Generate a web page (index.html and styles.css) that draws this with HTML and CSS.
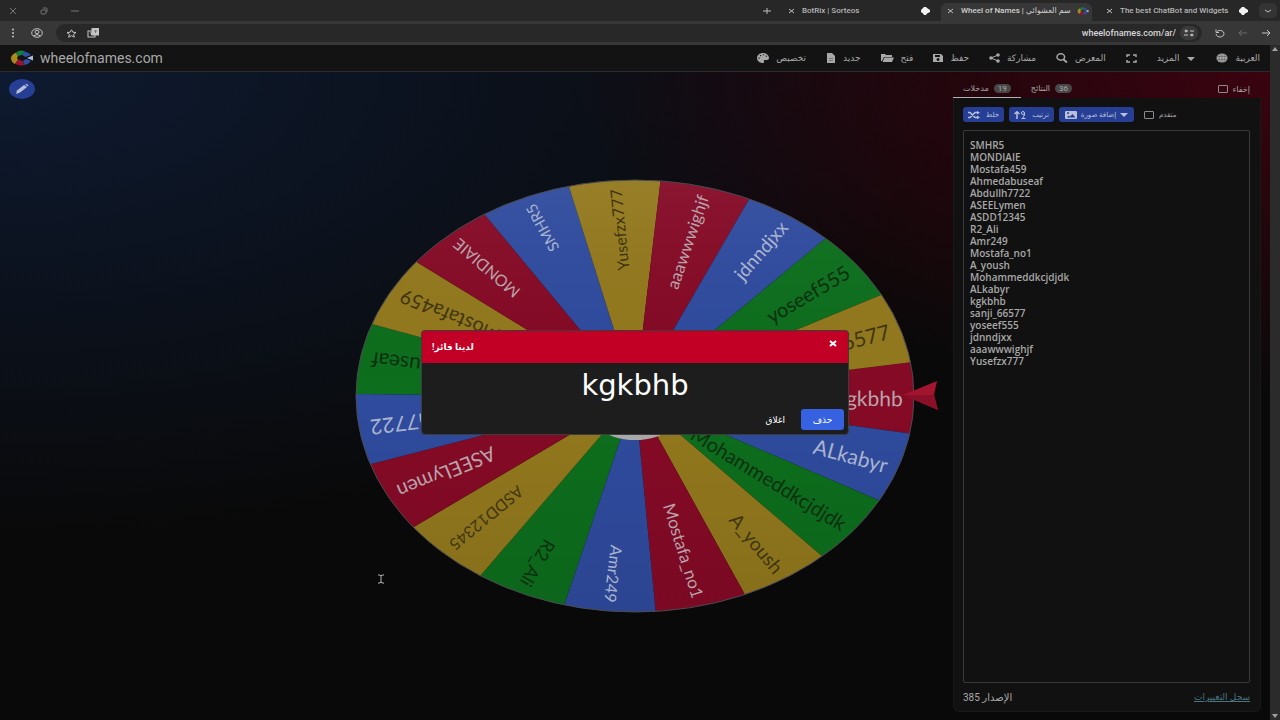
FILE: index.html
```html
<!DOCTYPE html>
<html lang="ar">
<head>
    <meta charset="UTF-8">
    <meta name="viewport" content="width=device-width, initial-scale=1">
    <title>Wheel of Names</title>
    <link rel="stylesheet" href="styles.css">
</head>
<body>
    <div class="tab-strip">
        <div class="window-controls">
            <button aria-label="Close window"><svg width="8" height="8" viewBox="0 0 8 8"><path d="M1 1l6 6M7 1L1 7"/></svg></button>
            <button aria-label="Restore window"><svg width="8" height="8" viewBox="0 0 8 8"><rect x="1" y="3" width="5" height="4" rx="1"/><path d="M3 1h3q1 0 1 1v3"/></svg></button>
            <button aria-label="Minimize window"><svg width="8" height="8" viewBox="0 0 8 8"><path d="M0 4h8"/></svg></button>
        </div>
        <button class="new-tab" aria-label="New tab"><svg width="8" height="8" viewBox="0 0 8 8"><path d="M0 4h8M4 1v6"/></svg></button>
        <div class="tab">
            <button class="tab-close" aria-label="Close tab"><svg width="8" height="8" viewBox="0 0 8 8"><path d="M1 2l5 4M6 2L1 6"/></svg></button>
            <span class="tab-title">BotRix | Sorteos</span>
            <svg class="favicon" width="10" height="8" viewBox="0 0 10 8"><path d="M4 0h2l1 1l3 2v2L7 6.500L6 8H4L3 6.500L1 5V3l2-2z" fill="#f2f2f2"/></svg>
        </div>
        <div class="tab active">
            <button class="tab-close" aria-label="Close tab"><svg width="8" height="8" viewBox="0 0 8 8"><path d="M1 2l5 4M6 2L1 6"/></svg></button>
            <span class="tab-title">Wheel of Names | سم العشوائي</span>
            <svg class="favicon" width="12" height="8" viewBox="0 0 24 16"><use href="#wheel-logo"/></svg>
        </div>
        <div class="tab">
            <button class="tab-close" aria-label="Close tab"><svg width="8" height="8" viewBox="0 0 8 8"><path d="M1 2l5 4M6 2L1 6"/></svg></button>
            <span class="tab-title">The best ChatBot and Widgets</span>
            <svg class="favicon" width="10" height="8" viewBox="0 0 10 8"><path d="M4 0h2l1 1l3 2v2L7 6.500L6 8H4L3 6.500L1 5V3l2-2z" fill="#f2f2f2"/></svg>
        </div>
        <button class="tab-search" aria-label="Search tabs"><svg width="8" height="8" viewBox="0 0 8 8"><path d="M1 3l3 2l3-2"/></svg></button>
    </div>

    <div class="address-bar">
        <button aria-label="Menu"><svg width="10" height="10" viewBox="0 0 10 10"><g fill="#c4c4c4" stroke="none"><circle cx="5" cy="1.5" r="1"/><circle cx="5" cy="5" r="1"/><circle cx="5" cy="8.5" r="1"/></g></svg></button>
        <button aria-label="Profile"><svg width="12" height="10" viewBox="0 0 12 10"><ellipse cx="6" cy="5" rx="5.3" ry="4.3"/><ellipse cx="6" cy="4" rx="2" ry="1.6"/><path d="M2.5 8q3.500-3 7 0"/></svg></button>
        <div class="url-box">
            <button aria-label="Bookmark"><svg width="11" height="9" viewBox="0 0 11 9"><path d="M5.500.8l1.300 2.400l3.200.3l-2.400 1.900l.7 2.800l-2.800-1.500l-2.800 1.500l.7-2.800L1 3.500l3.200-.3z"/></svg></button>
            <button aria-label="Translate"><svg width="12" height="10" viewBox="0 0 12 10"><rect x="1" y="3" width="7" height="6"/><rect x="5" y="0.500" width="6.500" height="6.500" fill="#c4c4c4"/><path d="M3 5h3M4.500 5v2"/><path d="M7 3h3M8.500 2v3" stroke="#777"/></svg></button>
            <input type="text" value="wheelofnames.com/ar/" aria-label="Address">
            <button class="site-info" aria-label="Site information"><svg width="10" height="8" viewBox="0 0 10 8"><path d="M1 2h3M6 2h4M0 6h4M6 6h3"/><circle cx="2" cy="2" r="1"/><circle cx="8" cy="6" r="1"/></svg></button>
        </div>
        <button aria-label="Reload"><svg width="10" height="9" viewBox="0 0 10 9"><path d="M2 2.500a4 3.300 0 1 1-1 2.500M1 0.500v3h3"/></svg></button>
        <button class="faded" aria-label="Forward"><svg width="10" height="8" viewBox="0 0 10 8"><path d="M9 4H1M4 1L1 4l3 3"/></svg></button>
        <button aria-label="Back"><svg width="10" height="8" viewBox="0 0 10 8"><path d="M1 4h8M6 1l3 3l-3 3"/></svg></button>
    </div>

    <div class="viewport">
        <div class="page">
            <header class="app-header">
                <a class="brand" href="#">
                    <svg width="24" height="16" viewBox="0 0 24 16">
                        <g id="wheel-logo">
                            <path d="M6 2.500L8 6L7 8H1q0-3 5-5.500z" fill="#a98a1c"/>
                            <path d="M1 8h6l1 2l-3 4q-4-2-4-6z" fill="#a98a1c"/>
                            <path d="M5 13.500l3.500-4l4 1.500l2 4q-6 1.500-9.500-1.500z" fill="#9c1030"/>
                            <path d="M6 2.500q4-3.500 9-1L12 5L8 6z" fill="#11803a"/>
                            <path d="M15 1.500q4 1 6 3.500l-5.500 2l-3.500-2z" fill="#2e50a8"/>
                            <path d="M13 11L16 9l5 2q-2 3-6.500 4z" fill="#2e50a8"/>
                            <path d="M17 8l6-2.500v5z" fill="#a9bfe0"/>
                        </g>
                    </svg>
                    <span>wheelofnames.com</span>
                </a>
                <nav class="menu">
                    <button><svg width="12" height="10" viewBox="0 0 12 10"><path class="solid" fill-rule="evenodd" d="M6 0C2.500 0 0 2.200 0 5s2.500 5 6 5c1.200 0 1.300-1 .9-1.600C6.500 7.500 7 7 8 7h2c1.200 0 2-.9 2-2C12 2.200 9.300 0 6 0zM2 4.500a.7 .6 0 1 0 .1 0zM3.500 2a.7 .6 0 1 0 .1 0zM6.500 1.200a.7 .6 0 1 0 .1 0zM9.300 2.500a.7 .6 0 1 0 .1 0z"/></svg>تخصيص</button>
                    <button><svg width="10" height="10" viewBox="0 0 10 10"><path class="solid" d="M1 0h5l3 3v7H1z"/><path d="M3 5.500h4M3 7.500h4" stroke="#777"/></svg>جديد</button>
                    <button><svg width="13" height="10" viewBox="0 0 13 10"><path class="solid" d="M0 1h4l1 1h6v2H3L1 8H0zM3.500 4.500H13L11 9H1.500z"/></svg>فتح</button>
                    <button><svg width="10" height="10" viewBox="0 0 10 10"><path class="solid" fill-rule="evenodd" d="M0 1h8l2 2v6H0zM2 2h5v2H2zM5 5a1.500 1.500 0 1 0 .1 0z"/></svg>حفظ</button>
                    <button><svg width="11" height="10" viewBox="0 0 11 10"><path d="M9 2L2 5l7 3"/><g class="solid"><circle cx="9" cy="2" r="1.800"/><circle cx="2" cy="5" r="1.800"/><circle cx="9" cy="8" r="1.800"/></g></svg>مشاركة</button>
                    <button><svg width="12" height="10" viewBox="0 0 12 10"><ellipse cx="4.800" cy="4" rx="3.800" ry="3.200" stroke-width="1.500"/><path d="M7.500 6.500l3.500 3" stroke-width="1.800"/></svg>المعرض</button>
                    <button aria-label="Fullscreen"><svg width="11" height="9" viewBox="0 0 11 9"><path d="M1 3V1h3M7 1h3v2M1 6v2h3M7 8h3V6" stroke-width="1.500"/></svg></button>
                    <button>المزيد<svg width="10" height="10" viewBox="0 0 10 10"><path class="solid" d="M1 4h8l-4 4z"/></svg></button>
                    <button><svg width="12" height="10" viewBox="0 0 12 10"><ellipse class="solid" cx="6" cy="5" rx="5.500" ry="4.500"/><path d="M0 3.500h12M0 6.500h12M6 0v10M4 1q-2 4 0 8M8 1q2 4 0 8" stroke="#555" stroke-width=".5"/></svg>العربية</button>
                </nav>
            </header>

            <main class="content">
                <div class="side">
                    <button class="edit-button" aria-label="Edit title"><svg width="14" height="12" viewBox="0 0 14 12"><path d="M1 11l1-3.500L9 2l3 2L5 9.500z" fill="#b9c1da"/><path d="M10 1.500q1-1 2.500 0t.500 2z" fill="#b9c1da"/></svg></button>
                </div>

                <svg class="wheel" viewBox="0 0 620 440" role="img" aria-label="Wheel">
                    <defs>
                        <linearGradient id="shade" x1="0" y1="0" x2="0" y2="1">
                            <stop offset="0" stop-color="#fff" stop-opacity=".05"/>
                            <stop offset="0.500" stop-color="#000" stop-opacity="0"/>
                            <stop offset="1" stop-color="#000" stop-opacity=".08"/>
                        </linearGradient>
                    </defs>
                    <g id="slices"></g>
                    <ellipse class="rim" cx="310" cy="220" rx="279" ry="216" fill="url(#shade)"/>
                    <g id="labels"></g>
                    <ellipse cx="310" cy="220" rx="56" ry="44" fill="#a8a8a8"/>
                    <path d="M578 219L612 205L609 219L613 234z" fill="#a3142f"/>
                    <path d="M578 219L609 219L613 234z" fill="#8a0f28"/>
                </svg>

                <aside class="side entries">
                    <div class="entries-tabs">
                        <button class="entries-tab selected"><span>مدخلات</span><span class="badge">19</span></button>
                        <button class="entries-tab"><span>النتائج</span><span class="badge">36</span></button>
                        <label class="check"><input type="checkbox">إخفاء</label>
                    </div>
                    <div class="card">
                        <div class="tools">
                            <button class="tool shuffle"><svg width="12" height="8" viewBox="0 0 12 8"><path d="M0 1.500h2l5 5h3M0 6.500h2l5-5h3" stroke-width="1.500"/><path d="M9 0l3 1.500L9 3.500zM9 4.500l3 2L9 8z" fill="#b9c1da" stroke="none"/></svg>خلط</button>
                            <button class="tool sort"><svg width="12" height="8" viewBox="0 0 12 8"><path d="M3 8V1M0.500 3L3 .8L5.500 3" stroke-width="1.500"/><circle cx="9" cy="2" r="1.500"/><path d="M10.500 2v2l-2 3.500M7.500 7.500h4"/></svg>ترتيب</button>
                            <button class="tool image"><svg width="12" height="8" viewBox="0 0 12 8"><path fill="#b9c1da" stroke="none" fill-rule="evenodd" d="M1 0h10q1 0 1 1v6q0 1-1 1H1q-1 0-1-1V1q0-1 1-1zM2 6.500h8.500L7.500 3L5 5.500L3.500 4.500zM3 1.300a1 .8 0 1 0 .1 0z"/></svg>إضافة صورة<svg width="8" height="4" viewBox="0 0 8 4"><path d="M0 0h8L4 4z" fill="#b9c1da" stroke="none"/></svg></button>
                            <label class="check small"><input type="checkbox">متقدم</label>
                        </div>
                        <textarea class="names" aria-label="Entries" spellcheck="false">SMHR5
MONDIAIE
Mostafa459
Ahmedabuseaf
Abdullh7722
ASEELymen
ASDD12345
R2_Ali
Amr249
Mostafa_no1
A_yoush
Mohammeddkcjdjdk
ALkabyr
kgkbhb
sanji_66577
yoseef555
jdnndjxx
aaawwwighjf
Yusefzx777</textarea>
                        <footer class="card-footer">
                            <span class="version" dir="rtl">الإصدار 385</span>
                            <a href="#">سجل التغييرات</a>
                        </footer>
                    </div>
                </aside>
            </main>

            <div class="overlay">
                <div class="dialog" role="dialog" aria-labelledby="dialog-title">
                    <div class="dialog-header">
                        <span id="dialog-title" dir="rtl">لدينا فائز!</span>
                        <button class="dialog-close" aria-label="Close"><svg width="8" height="7" viewBox="0 0 8 7"><path d="M1 1l6 5M7 1L1 6"/></svg></button>
                    </div>
                    <div class="winner">kgkbhb</div>
                    <div class="dialog-buttons">
                        <button class="plain">اغلاق</button>
                        <button class="primary">حذف</button>
                    </div>
                </div>
            </div>
            <svg class="pointer" width="8" height="10" viewBox="0 0 8 10"><path d="M1 1h2l1 1l1-1h2M4 2v6M1 9h2l1-1l1 1h2"/></svg>
        </div>
        <div class="scrollbar">
            <svg width="6" height="4" viewBox="0 0 6 4"><path d="M0 4h6L3 0z"/></svg>
            <svg width="6" height="4" viewBox="0 0 6 4"><path d="M0 0h6L3 4z"/></svg>
        </div>
    </div>
    <script src="wheel.js"></script>
</body>
</html>
```
FILE: styles.css
```css
* {
    box-sizing: border-box;
}

body {
    margin: 0;
    min-height: 100vh;
    display: flex;
    flex-direction: column;
    background-color: #090909;
    color: #a8a8a8;
    font-family: Roboto, "DejaVu Sans", sans-serif;
    font-size: 9px;
}

button {
    display: flex;
    align-items: center;
    justify-content: center;
    padding: 0;
    border: none;
    background: none;
    color: inherit;
    font: inherit;
    cursor: pointer;
}

svg {
    display: block;
    flex: none;
    fill: none;
    stroke: none;
}

/* Browser frame */
.tab-strip {
    display: flex;
    align-items: center;
    gap: 8px;
    height: 21px;
    padding: 0 3px 0 9px;
    background-color: #272727;
    font-size: 8px;
}

.tab-strip button svg {
    stroke: #bdbdbd;
}

.window-controls {
    display: flex;
    gap: 23px;
    margin-right: auto;
}

.window-controls .window-controls button svg,
.window-controls button svg {
    stroke: #777;
}

.new-tab {
    margin-right: 3px;
}

.tab {
    display: flex;
    align-items: center;
    gap: 6px;
    width: 151px;
    height: 18px;
    margin-top: 3px;
    padding: 0 3px 3px 6px;
    border-radius: 6px 6px 0 0;
}

.tab.active {
    background-color: #373737;
}

.tab-title {
    flex: 1;
    overflow: hidden;
    white-space: nowrap;
    font-weight: 500;
    color: #b5b5b5;
}

.tab.active .tab-title {
    color: #d0d0d0;
}

.tab-search {
    width: 18px;
    height: 15px;
    border-radius: 5px;
    background-color: #343434;
}

.address-bar {
    display: flex;
    align-items: center;
    gap: 13px;
    height: 24px;
    padding: 0 9px 0 8px;
    background-color: #373737;
}

.address-bar svg {
    stroke: #c4c4c4;
}

.address-bar .faded svg {
    stroke: #6c6c6c;
}

.url-box {
    flex: 1;
    display: flex;
    align-items: center;
    gap: 10px;
    height: 18px;
    padding: 0 4px 0 10px;
    border-radius: 9px;
    background-color: #282828;
}

.url-box input {
    flex: 1;
    min-width: 0;
    padding: 0;
    border: none;
    background: none;
    color: #d6d6d6;
    font: 500 9px Roboto, sans-serif;
    text-align: right;
    outline: none;
}

.url-box .site-info {
    width: 18px;
    height: 14px;
    margin-left: -6px;
    border-radius: 7px;
    background-color: #3a3a3a;
}

/* Page */
.viewport {
    flex: 1;
    display: flex;
}

.page {
    position: relative;
    flex: 1;
    min-width: 0;
    display: flex;
    flex-direction: column;
}

.scrollbar {
    width: 10px;
    padding: 2px 1px;
    display: flex;
    flex-direction: column;
    justify-content: space-between;
    align-items: center;
    background-color: #2b2b2b;
}

.scrollbar path {
    fill: #a0a0a0;
}

.app-header {
    display: flex;
    align-items: center;
    justify-content: space-between;
    height: 27px;
    padding: 0 10px;
    background-color: #131313;
    border-bottom: 1px solid #2a2a30;
}

.brand {
    display: flex;
    align-items: center;
    gap: 6px;
    color: #a8a8a8;
    font-size: 14px;
    text-decoration: none;
}

.menu {
    display: flex;
    gap: 20px;
}

.menu button {
    gap: 7px;
}

.menu svg {
    stroke: #a8a8a8;
}

.menu .solid {
    fill: #a8a8a8;
    stroke: none;
}

.content {
    flex: 1;
    display: grid;
    grid-template-columns: minmax(0, 1fr) minmax(0, 620px) minmax(0, 1fr);
    background-color: #090909;
    background-image:
        radial-gradient(ellipse 55% 50% at 100% 0, #3a0310 0, rgba(58, 3, 16, 0) 100%),
        radial-gradient(ellipse 75% 72% at 0 0, #0e1a30 0, rgba(14, 26, 48, 0) 100%);
}

.wheel {
    align-self: center;
    width: 100%;
    height: auto;
}

.wheel text {
    font-family: Lato, sans-serif;
    text-anchor: end;
    dominant-baseline: central;
}

.rim {
    stroke: #4a4a50;
    stroke-width: 1px;
}

.edit-button {
    width: 26px;
    height: 20px;
    margin: 7px 9px;
    border-radius: 50%;
    background-color: #263f94;
}

/* Entries panel */
.entries {
    display: flex;
    flex-direction: column;
    width: 308px;
    margin: 8px 9px 8px auto;
}

.entries-tabs {
    display: flex;
    height: 18px;
    padding-right: 11px;
    font-size: 8px;
}

.entries-tab {
    gap: 5px;
    padding: 0 10px;
    border-bottom: 1px solid transparent;
}

.entries-tab.selected {
    border-bottom-color: #b0b0b0;
}

.badge {
    padding: 0 4px;
    border-radius: 5px;
    background-color: #484848;
    line-height: 9px;
}

.check {
    display: flex;
    align-items: center;
    gap: 5px;
    margin-left: auto;
}

.check input {
    appearance: none;
    width: 10px;
    height: 8px;
    margin: 0;
    border: 1px solid #8c8c8c;
    border-radius: 1px;
}

.card {
    flex: 1;
    display: flex;
    flex-direction: column;
    padding: 9px 10px 7px 9px;
    border: 1px solid #191919;
    border-top: none;
    border-radius: 0 0 6px 6px;
    background-color: #111111;
}

.tools {
    display: flex;
    align-items: center;
    gap: 5px;
    margin-bottom: 8px;
}

.tool {
    gap: 6px;
    height: 15px;
    padding: 0 4px;
    border-radius: 3px;
    background-color: #263f94;
    color: #b9c1da;
    font-size: 7px;
    white-space: nowrap;
}

.tool svg {
    stroke: #b9c1da;
}

.tool.shuffle {
    width: 41px;
}

.tool.sort {
    width: 45px;
}

.tool.image {
    width: 75px;
    gap: 4px;
}

.check.small {
    margin-left: 5px;
    font-size: 7px;
}

.names {
    flex: 1;
    width: 100%;
    padding: 8px 6px;
    border: 1px solid #3a3a3a;
    border-radius: 2px;
    background: none;
    color: #a8a8a8;
    font: 600 10px/12px "Open Sans", sans-serif;
    resize: none;
    outline: none;
}

.card-footer {
    display: flex;
    justify-content: space-between;
    margin-top: 8px;
    line-height: 13px;
}

.card-footer .version {
    font-size: 10px;
}

.card-footer a {
    color: #47747f;
}

/* Winner dialog */
.overlay {
    position: absolute;
    inset: 0;
    display: flex;
    align-items: center;
    justify-content: center;
}

.dialog {
    width: 100%;
    max-width: 428px;
    overflow: hidden;
    border: 1px solid #3c3c3c;
    border-radius: 4px;
    background-color: #1d1d1d;
    color: #fff;
}

.dialog-header {
    display: flex;
    justify-content: space-between;
    align-items: center;
    height: 32px;
    padding: 0 11px 0 10px;
    background-color: #c20026;
    font-weight: bold;
}

.dialog-close {
    margin-bottom: 8px;
}

.dialog-close svg {
    stroke: #fff;
    stroke-width: 2px;
}

.winner {
    padding-top: 4px;
    font: 29px/36px "DejaVu Sans", sans-serif;
    text-align: center;
}

.dialog-buttons {
    display: flex;
    justify-content: flex-end;
    gap: 5px;
    padding: 6px 4px 4px;
}

.dialog-buttons button {
    height: 21px;
    border-radius: 3px;
}

.dialog-buttons .plain {
    padding: 0 11px;
}

.dialog-buttons .primary {
    width: 43px;
    background-color: #3661e0;
}

.pointer {
    position: absolute;
    left: 377px;
    top: 529px;
    stroke: #b5b5b5;
}
```
FILE: wheel.js
```js
const names = [
    'kgkbhb', 'ALkabyr', 'Mohammeddkcjdjdk', 'A_yoush', 'Mostafa_no1',
    'Amr249', 'R2_Ali', 'ASDD12345', 'ASEELymen', 'Abdullh7722',
    'Ahmedabuseaf', 'Mostafa459', 'MONDIAIE', 'SMHR5', 'Yusefzx777',
    'aaawwwighjf', 'jdnndjxx', 'yoseef555', 'sanji_66577'
];
// r = red, b = blue, g = green, y = yellow
const order = 'rbgyrbgyrbgyrbyrbgy';
const fills = { r: '#850a26', b: '#2f4b9e', g: '#0d6e1d', y: '#92781d' };
const inks = { r: '#b9a3ab', b: '#a9b3cf', g: '#0a3010', y: '#3f3510' };

const cx = 310;
const cy = 220;
const rx = 279;
const ry = 216;
const step = Math.PI * 2 / names.length;
const start = Math.PI / 360;
const ns = 'http://www.w3.org/2000/svg';

function point(angle, scale) {
    return [cx + rx * scale * Math.cos(angle), cy + ry * scale * Math.sin(angle)];
}

// all-caps names run wide, so they get a smaller size
function labelSize(name, angle) {
    const size = Math.round(16 + 5 * Math.abs(Math.cos(angle)));
    return /^[A-Z0-9]+$/.test(name) ? size - 3 : size;
}

names.forEach((name, i) => {
    const mid = start + i * step;
    const [x1, y1] = point(mid - step / 2, 1);
    const [x2, y2] = point(mid + step / 2, 1);
    const slice = document.createElementNS(ns, 'path');
    slice.setAttribute('d', `M${cx} ${cy}L${x1} ${y1}A${rx} ${ry} 0 0 1 ${x2} ${y2}z`);
    slice.setAttribute('fill', fills[order[i]]);
    document.getElementById('slices').appendChild(slice);

    const [tx, ty] = point(mid, 0.96);
    const turn = Math.atan2(ty - cy, tx - cx) * 180 / Math.PI;
    const label = document.createElementNS(ns, 'text');
    label.setAttribute('transform', `translate(${tx} ${ty}) rotate(${turn})`);
    label.setAttribute('font-size', labelSize(name, mid));
    label.setAttribute('fill', inks[order[i]]);
    label.textContent = name;
    document.getElementById('labels').appendChild(label);
});
```
